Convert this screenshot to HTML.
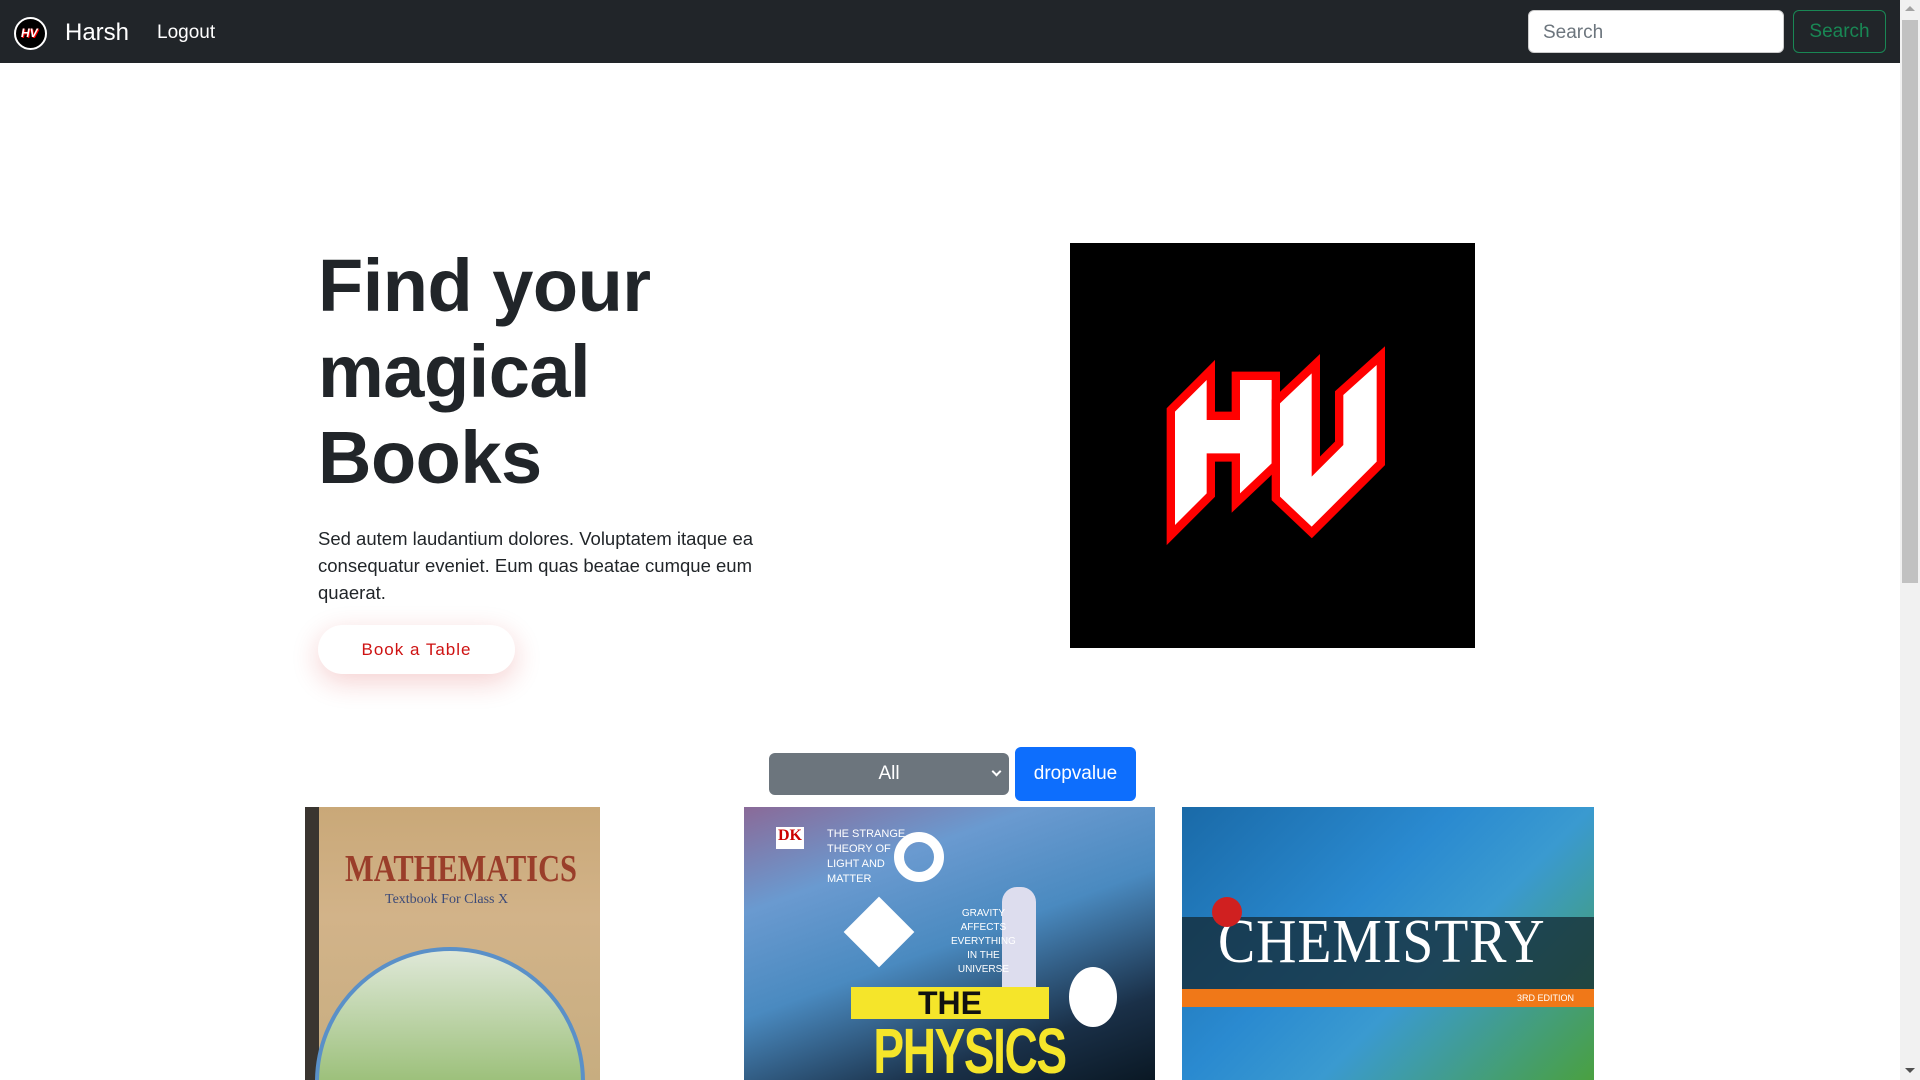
<!DOCTYPE html>
<html style="overflow:hidden"><head><meta charset="utf-8"><style>
*{box-sizing:border-box;margin:0;padding:0}
html,body{width:1920px;height:1080px;overflow:hidden}
body{background:#fff;font-family:"Liberation Sans",sans-serif;position:relative}
.nav{position:absolute;left:0;top:0;width:1900px;height:63px;background:#212529}
.abs{position:absolute}
.sb{position:absolute;left:1900px;top:0;width:20px;height:1080px;background:#f1f1f1}
.thumb{position:absolute;left:1902px;top:20px;width:16px;height:563px;background:#c1c1c1}
h1{position:absolute;left:318px;top:243px;font-size:74px;line-height:86px;font-weight:bold;color:#212529;letter-spacing:-0.5px}
p{position:absolute;left:318px;top:525px;width:490px;font-size:18.5px;line-height:27px;color:#212529}
</style></head><body>
<div class="nav"></div>
<div class="abs" style="left:14px;top:17px;width:33px;height:33px;border-radius:50%;border:2px solid #fff;background:#000"></div>
<div class="abs" style="left:21px;top:26px;font:bold italic 12px 'Liberation Sans';color:#fff;text-shadow:0 0 1px red,1px 1px 0 red">HV</div>
<div class="abs" style="left:65px;top:19px;font-size:24px;color:#fff">Harsh</div>
<div class="abs" style="left:157px;top:22px;font-size:19px;color:#fff">Logout</div>
<div class="abs" style="left:1528px;top:10px;width:256px;height:43px;background:#fff;border-radius:6px;border:1px solid #ccc;padding:11px 14px;font-size:19px;color:#6c757d">Search</div>
<div class="abs" style="left:1793px;top:10px;width:93px;height:43px;border:1px solid #198754;border-radius:6px;font-size:19px;color:#198754;text-align:center;line-height:41px">Search</div>
<div class="sb"></div><div class="thumb"></div>
<div class="abs" style="left:1905px;top:6px;width:0;height:0;border-left:5px solid transparent;border-right:5px solid transparent;border-bottom:5px solid #a3a3a3"></div>
<div class="abs" style="left:1905px;top:1068px;width:0;height:0;border-left:5px solid transparent;border-right:5px solid transparent;border-top:5px solid #505050"></div>

<h1>Find your<br>magical<br>Books</h1>
<p>Sed autem laudantium dolores. Voluptatem itaque ea consequatur eveniet. Eum quas beatae cumque eum quaerat.</p>
<div class="abs" style="left:318px;top:625px;width:197px;height:49px;border-radius:25px;background:#fff;box-shadow:0 8px 28px rgba(206,18,18,0.2);color:#ce1212;font-size:17px;letter-spacing:1px;text-align:center;line-height:49px">Book a Table</div>

<svg class="abs" style="left:1070px;top:243px" width="405" height="405" viewBox="30 9 1215 1215">
<rect x="30" y="9" width="1215" height="1215" fill="#000"/>
<g fill="#fff" stroke="#ff0000" stroke-width="50" stroke-linejoin="miter" paint-order="stroke">
<path d="M345,515 L440,420 L440,540 L540,540 L540,420 L635,420 L635,670 L540,760 L540,640 L440,640 L440,760 L345,855 Z"/>
<path d="M660,490 L755,400 L755,710 L850,615 L850,465 L950,375 L950,665 L755,860 L660,770 Z"/>
</g>
</svg>

<div class="abs" style="left:769px;top:753px;width:240px;height:42px;background:#6c757d;border-radius:6px;color:#fff;font-size:19px;text-align:center;line-height:42px">All</div>
<div class="abs" style="left:993px;top:768px;width:7px;height:7px;border-right:2px solid #fff;border-bottom:2px solid #fff;transform:rotate(45deg)"></div>
<div class="abs" style="left:1015px;top:747px;width:121px;height:54px;background:#0d6efd;border-radius:6px;color:#fff;font-size:19px;text-align:center;line-height:54px">dropvalue</div>

<div class="abs" style="left:305px;top:807px;width:295px;height:273px;background:linear-gradient(180deg,#c9a878 0%,#d2b389 40%,#c7ad80 100%);overflow:hidden">
<div class="abs" style="left:0;top:0;width:14px;height:273px;background:#3a3530"></div>
<div class="abs" style="left:40px;top:40px;font:bold 38px 'Liberation Serif';color:#9a3e2a;transform:scaleX(.8);transform-origin:left">MATHEMATICS</div>
<div class="abs" style="left:80px;top:85px;font:14px 'Liberation Serif';color:#3c4a78">Textbook For Class X</div>
<div class="abs" style="left:10px;top:140px;width:270px;height:270px;border-radius:50%;border:4px solid #5a90c8;background:linear-gradient(#dfe8d8 0%,#9cc07a 50%,#7aa860 100%)"></div>
</div>

<div class="abs" style="left:744px;top:807px;width:411px;height:273px;background:linear-gradient(160deg,#8a6a98 0%,#6a9ad0 25%,#4a8ac0 50%,#1a3048 80%,#0a1824 100%);overflow:hidden">
<div class="abs" style="left:32px;top:20px;width:28px;height:22px;background:#fff;color:#c00;font:bold 16px 'Liberation Serif';text-align:center">DK</div>
<div class="abs" style="left:83px;top:20px;font:11px 'Liberation Sans';color:#fff;line-height:15px">THE STRANGE<br>THEORY OF<br>LIGHT AND<br>MATTER</div>
<div class="abs" style="left:150px;top:25px;width:50px;height:50px;border-radius:50%;border:10px solid #fff"></div>
<div class="abs" style="left:110px;top:100px;width:50px;height:50px;background:#fff;transform:rotate(45deg)"></div>
<div class="abs" style="left:258px;top:80px;width:34px;height:105px;background:#dde;border-radius:15px 15px 4px 4px"></div>
<div class="abs" style="left:207px;top:100px;font:10px 'Liberation Sans';color:#fff;line-height:14px;text-align:center">GRAVITY<br>AFFECTS<br>EVERYTHING<br>IN THE<br>UNIVERSE</div>
<div class="abs" style="left:107px;top:180px;width:198px;height:32px;background:#f5e52a;font:bold 32px/32px 'Liberation Sans';color:#111;text-align:center">THE</div>
<div class="abs" style="left:100px;top:212px;width:210px;height:60px;font:bold 64px/64px 'Liberation Sans';color:#f5e52a;text-align:center;transform:scaleX(.72);letter-spacing:-2px">PHYSICS</div>
<div class="abs" style="left:325px;top:160px;width:48px;height:60px;border-radius:50%;background:#fff"></div>
</div>

<div class="abs" style="left:1182px;top:807px;width:412px;height:273px;background:linear-gradient(135deg,#1a6aa8 0%,#2a8ad0 40%,#3a9ad0 60%,#4aa040 100%);overflow:hidden">
<div class="abs" style="left:0;top:110px;width:412px;height:82px;background:rgba(20,40,50,.75)"></div>
<div class="abs" style="left:36px;top:100px;font:62px 'Liberation Serif';color:#fff;letter-spacing:1px;transform:scaleX(.9);transform-origin:left">CHEMISTRY</div>
<div class="abs" style="left:0;top:182px;width:412px;height:18px;background:#f07818;color:#fff;font:9px 'Liberation Sans';text-align:right;padding-right:20px;line-height:18px">3RD EDITION</div>
<div class="abs" style="left:30px;top:90px;width:30px;height:30px;border-radius:50%;background:#d02020"></div>
</div>
</body></html>
